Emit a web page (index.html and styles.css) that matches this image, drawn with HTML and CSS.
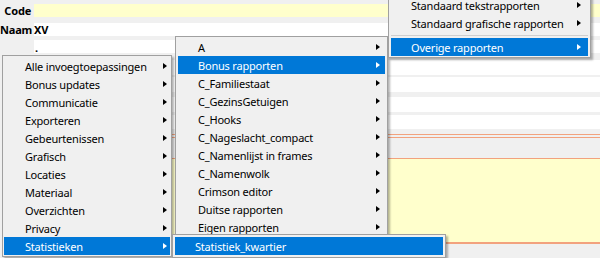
FILE: index.html
```html
<!DOCTYPE html>
<html lang="nl">
<head>
  <meta charset="UTF-8">
  <title>Rapporten</title>
  <link rel="stylesheet" href="styles.css">
</head>
<body>
  <div class="form">
    <div class="row r-code">
      <span class="label">Code</span>
      <div class="field yellow"></div>
    </div>
    <div class="row r-naam">
      <span class="label">Naam</span>
      <div class="field white bold">XV</div>
    </div>
    <div class="row r-dot">
      <span class="label"></span>
      <div class="field white dot">.</div>
    </div>
    <div class="row r-a"><span class="label"></span><div class="field white"></div></div>
    <div class="row r-b"><span class="label"></span><div class="field white"></div></div>
    <div class="row r-c"><span class="label"></span><div class="field white"></div></div>
    <div class="row r-d"><span class="label"></span><div class="field white"></div></div>
    <div class="rule"></div>
    <div class="band"></div>
    <div class="memo"></div>
  </div>

  <ul class="menu menu-left">
    <li>Alle invoegtoepassingen<i></i></li>
    <li>Bonus updates<i></i></li>
    <li>Communicatie<i></i></li>
    <li>Exporteren<i></i></li>
    <li>Gebeurtenissen<i></i></li>
    <li>Grafisch<i></i></li>
    <li>Locaties<i></i></li>
    <li>Materiaal<i></i></li>
    <li>Overzichten<i></i></li>
    <li>Privacy<i></i></li>
    <li class="active">Statistieken<i></i></li>
  </ul>

  <ul class="menu menu-mid">
    <li>A<i></i></li>
    <li class="active">Bonus rapporten<i></i></li>
    <li>C_Familiestaat<i></i></li>
    <li>C_GezinsGetuigen<i></i></li>
    <li>C_Hooks<i></i></li>
    <li>C_Nageslacht_compact<i></i></li>
    <li>C_Namenlijst in frames<i></i></li>
    <li>C_Namenwolk<i></i></li>
    <li>Crimson editor<i></i></li>
    <li>Duitse rapporten<i></i></li>
    <li>Eigen rapporten<i></i></li>
  </ul>

  <ul class="menu menu-stat">
    <li class="active">Statistiek_kwartier</li>
  </ul>

  <ul class="menu menu-top">
    <li>Standaard tekstrapporten<i></i></li>
    <li>Standaard grafische rapporten<i></i></li>
    <li class="sep"></li>
    <li class="active">Overige rapporten<i></i></li>
  </ul>
</body>
</html>
```

FILE: styles.css
```css
body {
  margin: 0;
  height: 258px;
  overflow: hidden;
  background-color: #f0f0f0;
  font-family: "Noto Sans", "Open Sans", sans-serif;
  font-size: 11px;
  letter-spacing: -0.2px;
  color: #000;
}

.form {
  display: flex;
  flex-direction: column;
  padding-top: 4px;
}

.row {
  display: flex;
  align-items: center;
}

.label {
  width: 31px;
  flex: none;
  margin-right: 3px;
  text-align: right;
  font-weight: bold;
  line-height: 13px;
}

.field {
  flex: 1;
  height: 13px;
  line-height: 13px;
}

.field.yellow { background-color: #ffffcc; }
.field.white { background-color: #fff; }
.field.bold { font-weight: bold; }
.field.dot {
  font-weight: bold;
  padding: 3px 0 0 1px;
  height: 10px;
  line-height: 10px;
}

.r-naam { margin-top: 6px; }
.r-dot { margin-top: 4px; }
.r-a { margin-top: 7px; }
.r-a .field { height: 15px; }
.r-b { margin-top: 2px; }
.r-b .field { height: 15px; }
.r-c { margin-top: 5px; }
.r-c .field { height: 15px; }
.r-d { margin-top: 3px; }
.r-d .field { height: 14px; }

.rule {
  margin: 5px 0 0 34px;
  height: 1px;
  background-color: #f2a27e;
}

.band {
  margin: 2px 0 0 34px;
  height: 20px;
  border-top: 1px solid #f2a27e;
  border-bottom: 1px solid #f2a27e;
}

.memo {
  margin-left: 34px;
  height: 83px;
  background-color: #ffffcc;
  border-bottom: 2px solid #f2a27e;
}

/* menus */

.menu {
  position: absolute;
  margin: 0;
  padding: 1px;
  list-style: none;
  background-color: #f0f0f0;
  border: 1px solid #a0a0a0;
  box-shadow: 2px 2px 2px rgba(0, 0, 0, 0.3);
}

.menu li {
  display: flex;
  align-items: center;
  justify-content: space-between;
  height: 18px;
  padding-left: 21px;
  padding-right: 3px;
  white-space: nowrap;
}

.menu li i {
  width: 0;
  height: 0;
  border-top: 3.5px solid transparent;
  border-bottom: 3.5px solid transparent;
  border-left: 4px solid #000;
}

.menu li.active {
  background-color: #0078d7;
  color: #fff;
}

.menu li.active i {
  border-left-color: #fff;
}

.menu-left {
  left: 2px;
  top: 55px;
  width: 166px;
  z-index: 1;
}

.menu-mid {
  left: 175px;
  top: 36px;
  width: 207px;
  padding: 1px 2px;
  z-index: 2;
}

.menu-mid li {
  padding-left: 20px;
  padding-right: 5px;
}

.menu-stat {
  left: 172px;
  top: 234px;
  width: 268px;
  padding: 2px;
  z-index: 3;
}

.menu-stat li {
  padding-left: 20px;
}

.menu-top {
  left: 388px;
  top: -6px;
  width: 197px;
  padding: 1px 2px;
  z-index: 4;
}

.menu-top li {
  padding-left: 20px;
  padding-right: 7px;
}

.menu-top li.sep {
  height: 6px;
  padding: 0;
}

.menu-top li.sep::after {
  content: "";
  flex: 1;
  height: 1px;
  background-color: #cfcfcf;
}
```
